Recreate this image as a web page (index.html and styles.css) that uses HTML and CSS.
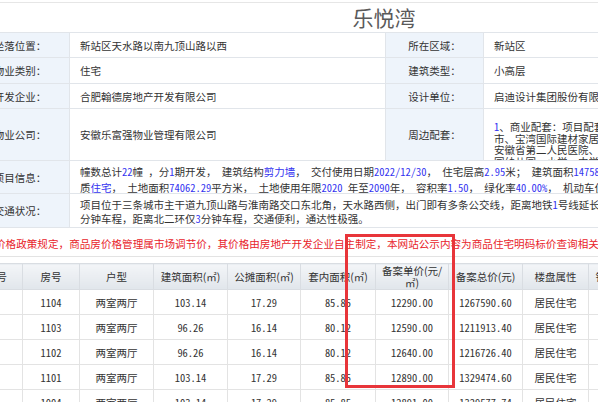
FILE: index.html
```html
<!DOCTYPE html>
<html lang="zh-CN">
<head>
<meta charset="utf-8">
<title>乐悦湾</title>
<link rel="stylesheet" href="styles.css">
</head>
<body>
<div class="page">
  <div class="topline"></div>
  <h1 class="title">乐悦湾</h1>
  <div class="info">
    <div class="lab r1">坐落位置：</div><div class="val">新站区天水路以南九顶山路以西</div><div class="lab">所在区域：</div><div class="val">新站区</div>
    <div class="lab r2">物业类别：</div><div class="val">住宅</div><div class="lab">建筑类型：</div><div class="val">小高层</div>
    <div class="lab r3">开发企业：</div><div class="val">合肥翰德房地产开发有限公司</div><div class="lab">设计单位：</div><div class="val">启迪设计集团股份有限公司</div>
    <div class="lab r4">物业公司：</div><div class="val">安徽乐富强物业管理有限公司</div><div class="lab">周边配套：</div><div class="val around"><span class="n">1</span>、商业配套：项目配套商业街，周边有华润万家超<br>市、宝湾国际建材家居城等；<span class="n">2</span>、医疗配套：<br>安徽省第二人民医院、市三院；<span class="n">3</span>、教育配套：碧桂<br>园幼儿园、小学、中学等。</div>
    <div class="lab r5">项目信息：</div><div class="val wide lh16">幢数总计<span class="n">22</span>幢&ensp;，分<span class="n">1</span>期开发，&ensp;建筑结构<span class="n">剪力墙</span>，&ensp;交付使用日期<span class="n">2022/12/30</span>，&ensp;住宅层高<span class="n">2.95</span>米；&ensp;建筑面积<span class="n">147580.16</span>平方米，&ensp;物业性<br>质<span class="n">住宅</span>，&ensp;土地面积<span class="n">74062.29</span>平方米，&ensp;土地使用年限<span class="n">2020</span>&ensp;年至<span class="n">2090</span>年，&ensp;容积率<span class="n">1.50</span>，&ensp;绿化率<span class="n">40.00%</span>，&ensp;机动车位<span class="n">1200</span>个。</div>
    <div class="lab r6">交通状况：</div><div class="val wide lh14">项目位于三条城市主干道九顶山路与淮南路交口东北角，天水路西侧，出门即有多条公交线，距离地铁<span class="n">1</span>号线延长线站点约<span class="n">10</span><br>分钟车程，距离北二环仅<span class="n">3</span>分钟车程，交通便利，通达性极强。</div>
  </div>
  <div class="notice">根据价格政策规定，商品房价格管理属市场调节价，其价格由房地产开发企业自主制定，本网站公示内容为商品住宅明码标价查询相关信息，仅供参考，实际以开发企业明码标价为准。</div>
  <table class="list">
    <colgroup>
      <col style="width:52px"><col style="width:57px"><col style="width:74px"><col style="width:74px"><col style="width:73px"><col style="width:75px"><col style="width:73px"><col style="width:74px"><col style="width:66px"><col style="width:56px"><col style="width:154px">
    </colgroup>
    <tr><th>序号</th><th>房号</th><th>户型</th><th>建筑面积(㎡)</th><th>公摊面积(㎡)</th><th>套内面积(㎡)</th><th>备案单价(元/<br>㎡)</th><th>备案总价(元)</th><th>楼盘属性</th><th>销售状态</th><th>备注</th></tr>
    <tr><td class="d">1</td><td class="d">1104</td><td>两室两厅</td><td class="d">103.14</td><td class="d">17.29</td><td class="d">85.85</td><td class="d">12290.00</td><td class="d">1267590.60</td><td>居民住宅</td><td>可售</td><td></td></tr>
    <tr><td class="d">2</td><td class="d">1103</td><td>两室两厅</td><td class="d">96.26</td><td class="d">16.14</td><td class="d">80.12</td><td class="d">12590.00</td><td class="d">1211913.40</td><td>居民住宅</td><td>可售</td><td></td></tr>
    <tr><td class="d">3</td><td class="d">1102</td><td>两室两厅</td><td class="d">96.26</td><td class="d">16.14</td><td class="d">80.12</td><td class="d">12640.00</td><td class="d">1216726.40</td><td>居民住宅</td><td>可售</td><td></td></tr>
    <tr><td class="d">4</td><td class="d">1101</td><td>两室两厅</td><td class="d">103.14</td><td class="d">17.29</td><td class="d">85.85</td><td class="d">12890.00</td><td class="d">1329474.60</td><td>居民住宅</td><td>可售</td><td></td></tr>
    <tr><td class="d">5</td><td class="d">1004</td><td>两室两厅</td><td class="d">103.14</td><td class="d">17.29</td><td class="d">85.85</td><td class="d">12891.00</td><td class="d">1329577.74</td><td>居民住宅</td><td>可售</td><td></td></tr>
  </table>
  <div class="mark"></div>
</div>
</body>
</html>
```

FILE: styles.css
```css
* { box-sizing: border-box; }
html, body { margin: 0; padding: 0; background: #fff; overflow: hidden; }
body {
  font-family: "Noto Sans CJK SC", "Liberation Sans", sans-serif;
  font-size: 10.5px;
  color: #333;
}
.page { position: relative; width: 828px; margin-left: -30px; }
.topline { height: 3px; border-bottom: 1px solid #e6e6e6; }
.title {
  margin: 0;
  height: 29px;
  line-height: 29px;
  font-size: 21px;
  font-weight: normal;
  text-align: center;
  color: #5a5a5a;
}
.info {
  display: grid;
  grid-template-columns: 98px 315px 97px 314px;
  grid-template-rows: 24px 25px 24px 51px 32px 33px;
  gap: 1px;
  background: #e1e5ea;
  border: 1px solid #e1e5ea;
  width: 828px;
}
.lab {
  background: #eef4fb;
  display: flex;
  align-items: center;
  justify-content: center;
  white-space: nowrap;
  overflow: hidden;
}
.val {
  background: #fff;
  display: flex;
  align-items: center;
  padding-left: 10px;
  white-space: nowrap;
  overflow: hidden;
}
.val.wide { grid-column: span 3; display: block; }
.lh16 { line-height: 16px; padding-top: 3px; }
.lh14 { line-height: 14px; padding-top: 4px; }
.around { display: block; padding-top: 12px; line-height: 11.5px; }
.n { color: #3434f0; font-feature-settings: "hwid" 1; }
.notice {
  height: 29px;
  line-height: 31px;
  font-size: 10.6px;
  color: #e8242b;
  border-bottom: 1px solid #e3e3e3;
  padding-left: 3.8px;
  white-space: nowrap;
  overflow: hidden;
}
.list { margin-top: 6px; width: 828px; border-collapse: collapse; table-layout: fixed; }
.list th {
  height: 26px;
  background: linear-gradient(#f3f5f8, #e1e6eb);
  border: 1px solid #d9dde2;
  font-weight: normal;
  line-height: 12px;
  text-align: center;
  padding: 0;
  white-space: nowrap;
  overflow: hidden;
}
.list td {
  height: 25px;
  border: 1px solid #e3e3e3;
  text-align: center;
  padding: 0;
  white-space: nowrap;
  overflow: hidden;
}
.list td.d { font-feature-settings: "hwid" 1; }
.mark {
  position: absolute;
  left: 375px;
  top: 234px;
  width: 110px;
  height: 154px;
  border: 3px solid #e8353a;
}
```
